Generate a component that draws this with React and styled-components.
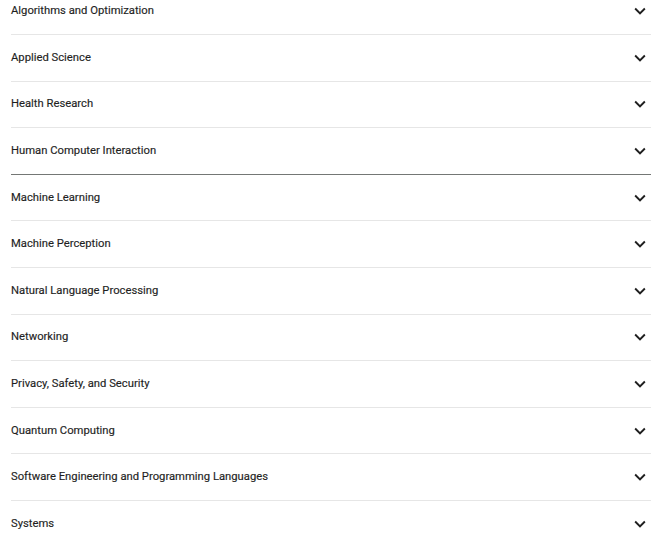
import React from 'react'
import styled, { createGlobalStyle } from 'styled-components'

const Global = createGlobalStyle`
body{
  margin:0;
  background:#fff;
  font-family:Roboto, "Liberation Sans", sans-serif;
  overflow:hidden;
}
`

const List = styled.div`
margin:-11.6px 9px 0 11px;
display:flex;
flex-direction:column;
`

const Row = styled.div`
box-sizing:border-box;
height:46.6px;
display:flex;
align-items:center;
justify-content:space-between;
border-bottom:1px solid ${p => (p.$active ? '#747775' : '#e6e6e6')};
cursor:pointer;
`

const Title = styled.span`
font-size:11.25px;
font-weight:400;
color:#1f1f1f;
-webkit-text-stroke:0.15px #1f1f1f;
padding-bottom:1px;
`

const Chevron = styled.svg`
width:22px;
height:22px;
fill:#1f1f1f;
flex:none;
`

const topics = [
  'Algorithms and Optimization',
  'Applied Science',
  'Health Research',
  'Human Computer Interaction',
  'Machine Learning',
  'Machine Perception',
  'Natural Language Processing',
  'Networking',
  'Privacy, Safety, and Security',
  'Quantum Computing',
  'Software Engineering and Programming Languages',
  'Systems',
]

const App = () => {
  return (
    <>
      <Global />
      <List>
        {topics.map(t => (
          <Row key={t} $active={t === 'Human Computer Interaction'}>
            <Title>{t}</Title>
            <Chevron viewBox="0 0 24 24">
              <path d="M16.59 8.59L12 13.17 7.41 8.59 6 10l6 6 6-6z" />
            </Chevron>
          </Row>
        ))}
      </List>
    </>
  )
}

export default App
